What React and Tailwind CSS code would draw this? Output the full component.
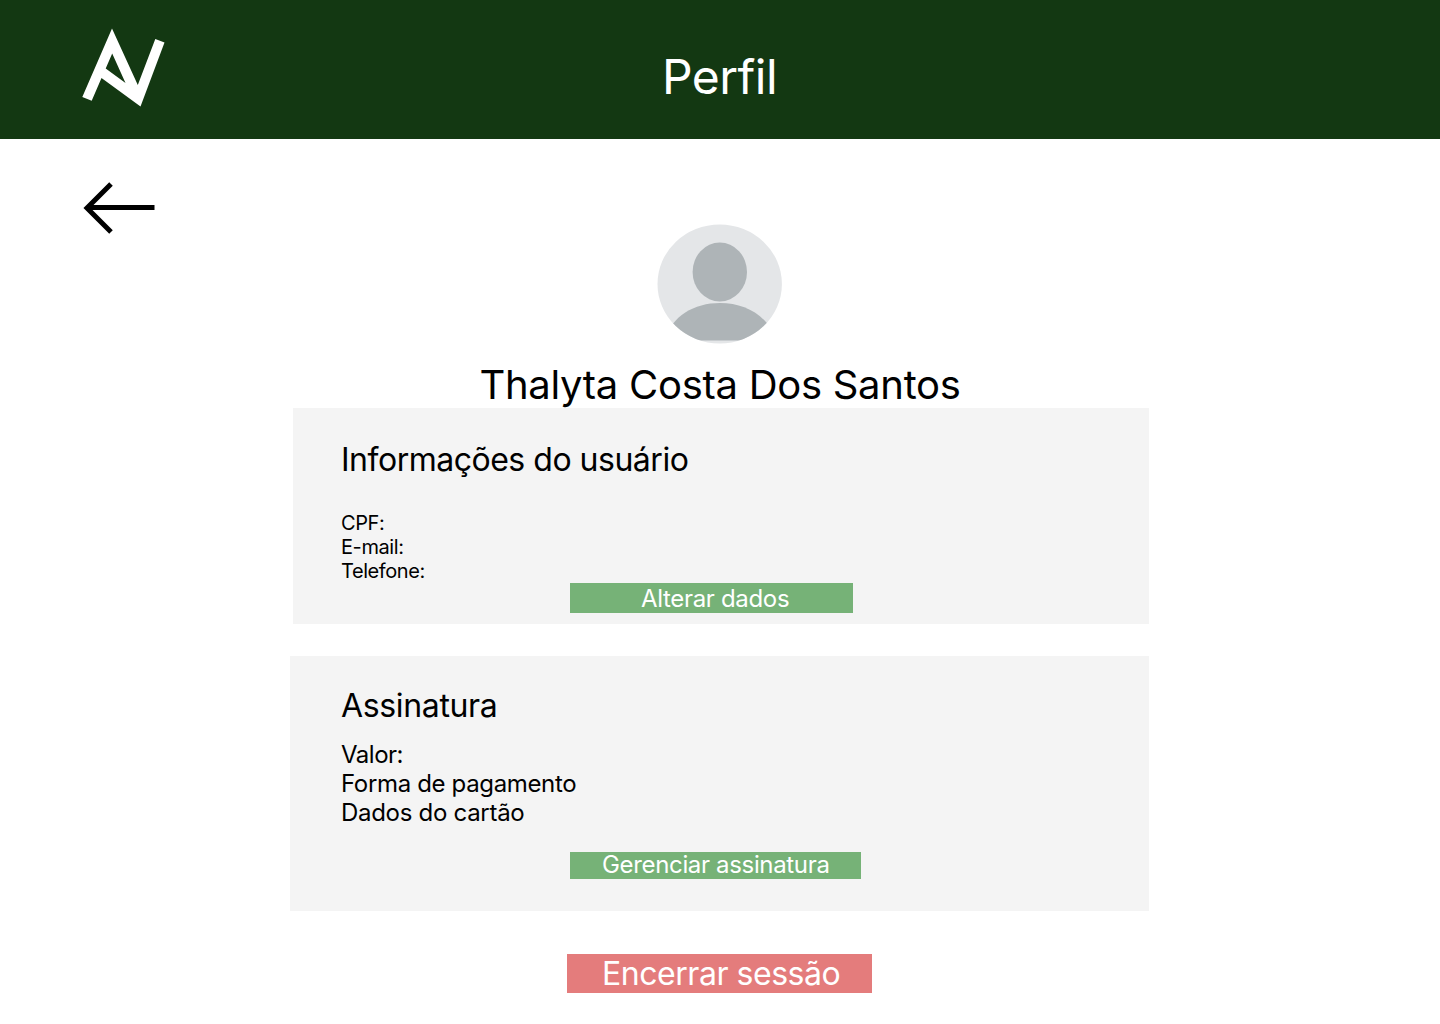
function Logo() {
  return (
    <svg className="ml-[80px] mt-[25px] block h-[85px] w-[90px]" viewBox="80 25 90 85" fill="#fff">
      <path
        fillRule="evenodd"
        d="M112 28.5L137.8 85L155.3 39L164.5 42.5L140.5 106.5L101.5 78L91.7 100.8L82.3 97ZM112.2 53.5L105.7 68.5L125.5 83Z"
      />
    </svg>
  );
}

function BackArrow() {
  return (
    <svg className="block h-[56px] w-[76px]" viewBox="80 180 76 56" fill="none" stroke="#000" strokeWidth="5">
      <path d="M154.5 207.5H87M111 184L87 208L111 232" />
    </svg>
  );
}

function Avatar() {
  return (
    <svg className="block h-[120px] w-[126px]" viewBox="657 224 126 120">
      <defs>
        <clipPath id="avatar-clip">
          <ellipse cx="719.7" cy="284" rx="62.2" ry="59.5" />
        </clipPath>
      </defs>
      <ellipse cx="719.7" cy="284" rx="62.2" ry="59.5" fill="#e4e6e8" />
      <g clipPath="url(#avatar-clip)" fill="#aeb4b7">
        <ellipse cx="719.8" cy="272" rx="27.2" ry="29.5" />
        <path d="M664 340.5C672 316 694 303 720 303C746 303 768 316 777 340.5Z" />
      </g>
    </svg>
  );
}

export default function App() {
  return (
    <div className="h-[1024px] w-[1440px] overflow-hidden bg-white font-normal text-black [font-family:Inter,sans-serif]">
      <header className="grid h-[139px] grid-cols-3 bg-[#133812] text-white">
        <Logo />
        <h1 className="pr-px pt-[48px] text-center text-[48px] leading-[58px] tracking-[-0.5px]">Perfil</h1>
      </header>
      <main className="flex flex-col">
        <button aria-label="Voltar" className="ml-[80px] mt-[41px] w-[76px]"><BackArrow /></button>
        <div className="-mt-[12px] ml-[657px]"><Avatar /></div>
        <h2 className="mt-[17px] h-[47px] whitespace-nowrap text-center text-[40px] leading-[48px] tracking-[-0.28px]">Thalyta Costa Dos Santos</h2>
        <section className="ml-[293px] h-[216px] w-[856px] bg-[#f4f4f4] pl-[48px] pt-[32px]">
          <h3 className="text-[32px] leading-[39px] tracking-[-0.49px]">Informações do usuário</h3>
          <div className="mt-[32px] text-[20px] leading-[24px] tracking-[-0.42px]">
            <p>CPF:</p>
            <p>E-mail:</p>
            <p>Telefone:</p>
          </div>
          <button className="ml-[229px] block h-[30px] w-[283px] bg-[#76b277] pl-[71px] text-left text-[24px] leading-[31px] tracking-[-0.33px] text-white">Alterar dados</button>
        </section>
        <section className="ml-[290px] mt-[32px] h-[255px] w-[859px] bg-[#f4f4f4] pl-[51px] pt-[30px]">
          <h3 className="text-[32px] leading-[39px] tracking-[-0.35px]">Assinatura</h3>
          <div className="mt-[15px] text-[24px] leading-[29px]">
            <p className="tracking-[-0.5px]">Valor:</p>
            <p className="tracking-[-0.35px]">Forma de pagamento</p>
            <p className="tracking-[-0.29px]">Dados do cartão</p>
          </div>
          <button className="ml-[229px] mt-[25px] block h-[27px] w-[291px] bg-[#76b277] pl-[32px] text-left text-[24px] leading-[24px] tracking-[-0.34px] text-white"><span className="block h-[26px]">Gerenciar assinatura</span></button>
        </section>
        <button className="ml-[567px] mt-[43px] h-[39px] w-[305px] bg-[#e47c7c] pl-[35px] text-left text-[32px] leading-[39px] tracking-[-0.46px] text-white">Encerrar sessão</button>
      </main>
    </div>
  );
}
